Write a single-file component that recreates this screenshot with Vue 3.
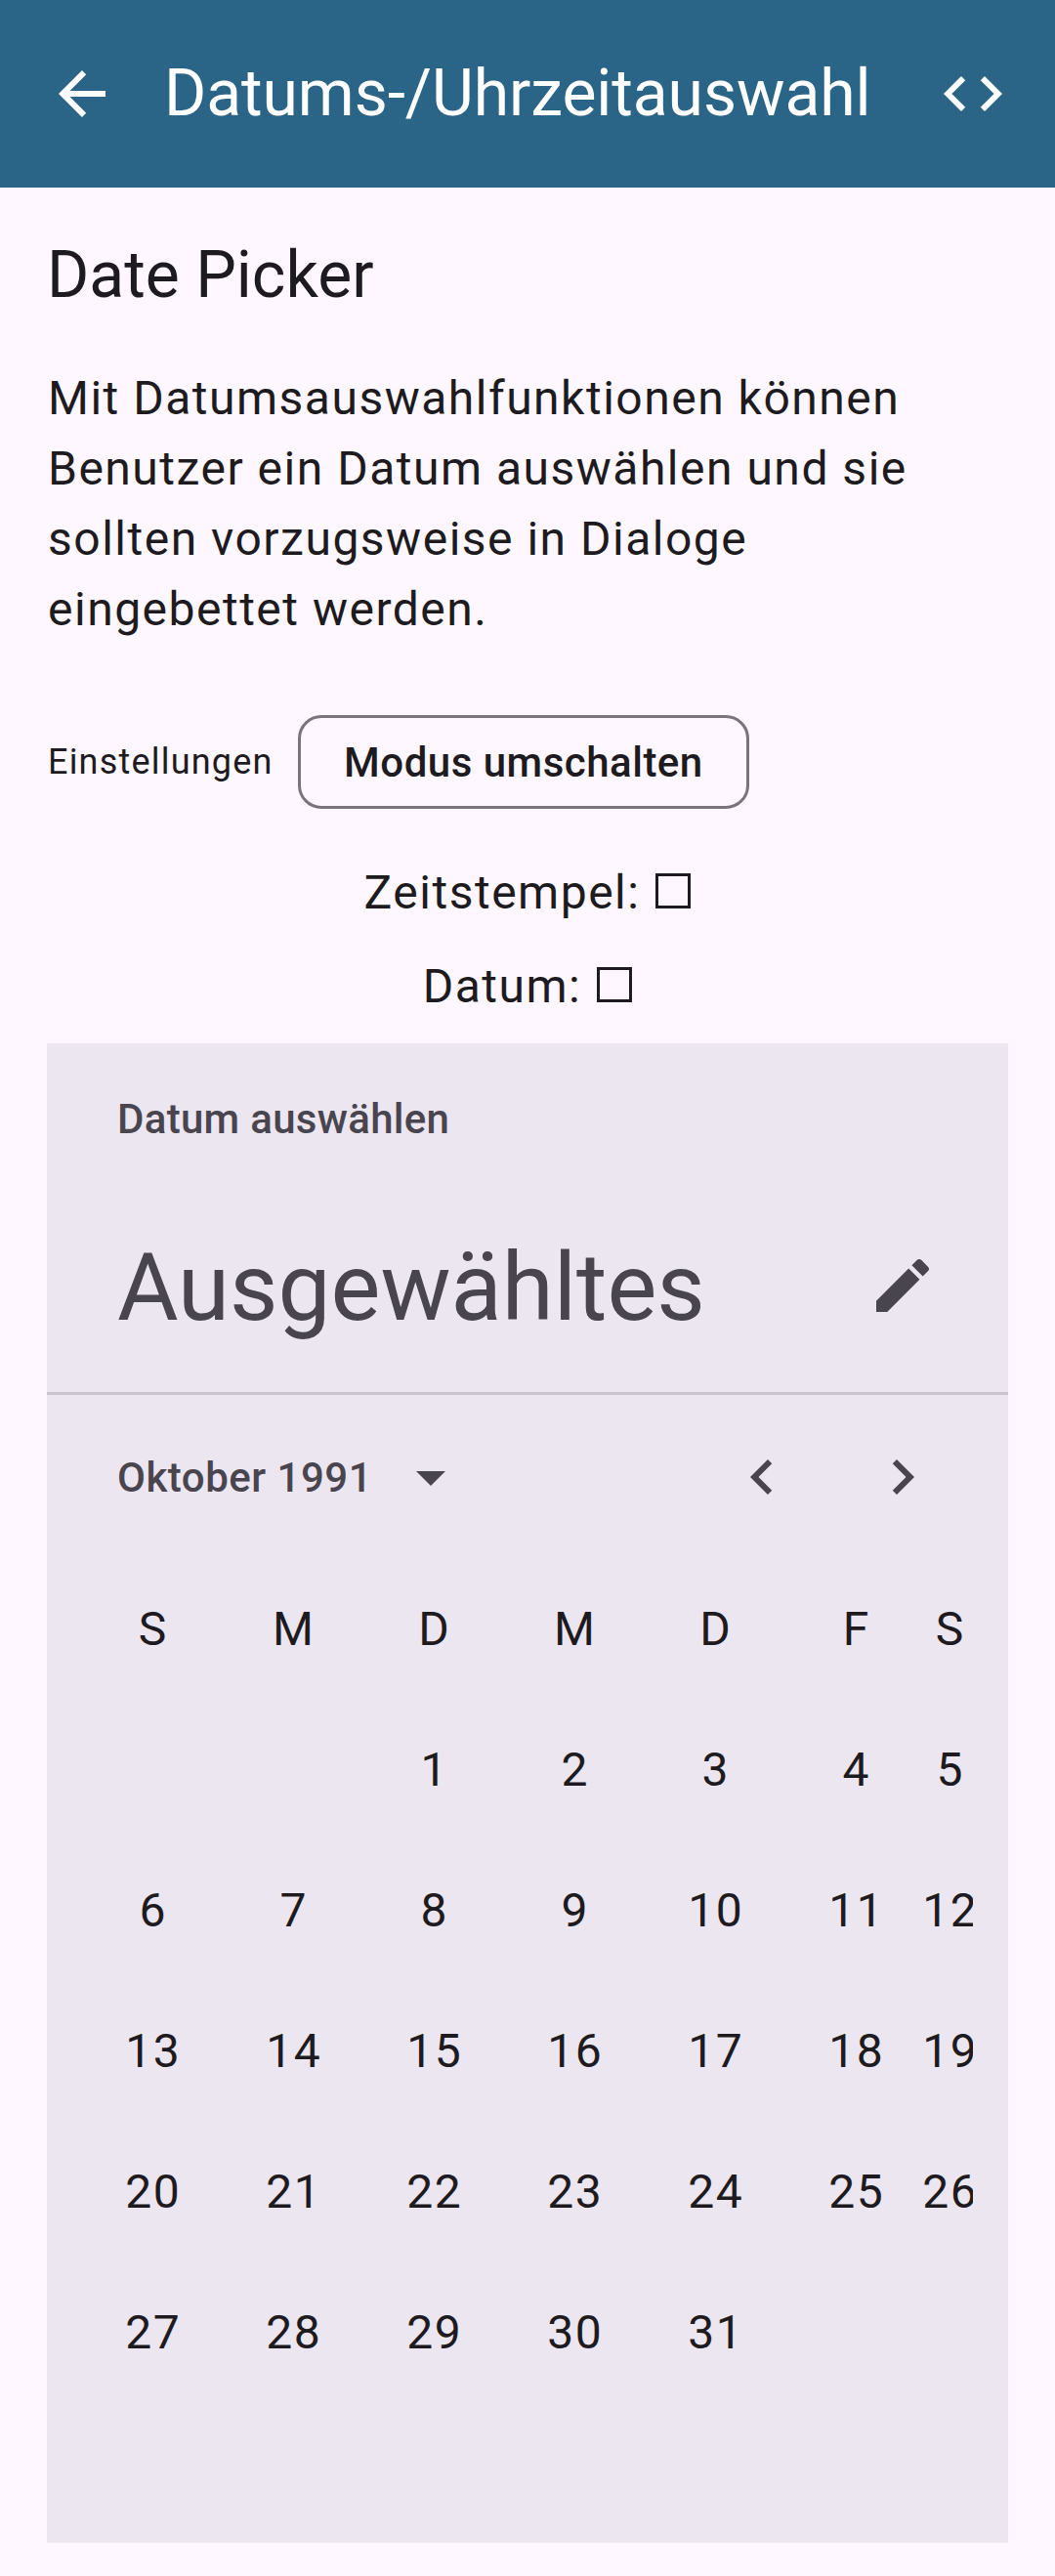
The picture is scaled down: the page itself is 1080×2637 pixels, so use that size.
<template>
  <div class="page">
    <header class="top-bar">
      <svg class="icon" viewBox="0 0 24 24"><path d="M20 11H7.83l5.59-5.59L12 4l-8 8 8 8 1.41-1.41L7.83 13H20v-2z" /></svg>
      <h1 class="top-title">Datums-/Uhrzeitauswahl</h1>
      <svg class="icon" viewBox="0 0 24 24"><path d="M9.4 16.6L4.8 12l4.6-4.6L8 6l-6 6 6 6 1.4-1.4zm5.2 0l4.6-4.6-4.6-4.6L16 6l6 6-6 6-1.4-1.4z" /></svg>
    </header>

    <main class="content">
      <h2 class="section-title">Date Picker</h2>
      <p class="description">
        Mit Datumsauswahlfunktionen können Benutzer ein Datum auswählen und sie sollten vorzugsweise in Dialoge eingebettet werden.
      </p>

      <div class="settings">
        <span class="settings-label">Einstellungen</span>
        <button class="mode-btn">Modus umschalten</button>
      </div>

      <div class="value-line"><span class="value-label">Zeitstempel:</span><span class="tofu"></span></div>
      <div class="value-line"><span class="value-label">Datum:</span><span class="tofu"></span></div>

      <section class="picker">
        <div class="picker-title">Datum auswählen</div>
        <div class="picker-headline">
          <span class="headline-text">Ausgewähltes</span>
          <svg class="icon dark" viewBox="0 0 24 24"><path d="M3 17.25V21h3.75L17.81 9.94l-3.75-3.75L3 17.25zM20.71 7.04c.39-.39.39-1.02 0-1.41l-2.34-2.34c-.39-.39-1.02-.39-1.41 0l-1.83 1.83 3.75 3.75 1.83-1.83z" /></svg>
        </div>
        <div class="divider"></div>

        <div class="month-row">
          <div class="month-select">
            <span>Oktober 1991</span>
            <svg class="icon dark" viewBox="0 0 24 24"><path d="M7 10l5 5 5-5z" /></svg>
          </div>
          <div class="month-nav">
            <svg class="icon dark" viewBox="0 0 24 24"><path d="M15.41 16.59L10.83 12l4.58-4.59L14 6l-6 6 6 6 1.41-1.41z" /></svg>
            <svg class="icon dark" viewBox="0 0 24 24"><path d="M8.59 16.59L13.17 12 8.59 7.41 10 6l6 6-6 6-1.41-1.41z" /></svg>
          </div>
        </div>

        <div class="calendar">
          <div v-for="(day, i) in weekdays" :key="'w' + i" class="cell">{{ day }}</div>
          <div v-for="(day, i) in days" :key="i" class="cell">{{ day }}</div>
        </div>
      </section>
    </main>
  </div>
</template>

<script setup>
const weekdays = ['S', 'M', 'D', 'M', 'D', 'F', 'S']

// Oktober 1991 beginnt am Dienstag
const days = ['', '']
for (let d = 1; d <= 31; d++) days.push(d)
while (days.length < 42) days.push('')
</script>

<style scoped>
.page {
  min-height: 2637px;
  background-color: #fef7ff;
  color: #1d1b20;
  font-family: Roboto, "Liberation Sans", sans-serif;
}

.top-bar {
  display: flex;
  align-items: center;
  justify-content: space-between;
  height: 192px;
  padding: 0 48px;
  box-sizing: border-box;
  background-color: #2a6486;
}

.top-bar .icon {
  fill: #ffffff;
}

.icon {
  width: 72px;
  height: 72px;
  flex-shrink: 0;
  display: block;
}

.icon.dark {
  fill: #49454f;
}

.top-title {
  flex: 1;
  margin: 0 0 0 48px;
  font-size: 66px;
  font-weight: 400;
  line-height: 84px;
  letter-spacing: -0.08px;
  color: #ffffff;
}

.content {
  padding: 48px 48px 0;
}

.section-title {
  margin: 0;
  font-size: 66px;
  font-weight: 400;
  line-height: 84px;
}

.description {
  margin: 48px 0 0;
  padding-left: 1px;
  font-size: 48px;
  line-height: 72px;
  letter-spacing: 1.5px;
}

.settings {
  display: flex;
  align-items: center;
  gap: 25px;
  height: 144px;
  margin-top: 48px;
  padding-left: 1px;
}

.settings-label {
  font-size: 36px;
  letter-spacing: 1.2px;
}

.mode-btn {
  height: 96px;
  padding: 0 44.5px;
  background: transparent;
  border: 3px solid #79747e;
  border-radius: 24px;
  color: #1d1b20;
  font-family: inherit;
  font-size: 42px;
  font-weight: 500;
  letter-spacing: 0.5px;
}

.value-line {
  display: flex;
  justify-content: center;
  align-items: center;
  gap: 16px;
  height: 72px;
  margin-top: 24px;
  font-size: 48px;
  letter-spacing: 1.5px;
}

.value-label {
  padding-top: 3px;
}

.tofu {
  width: 36px;
  height: 36px;
  box-sizing: border-box;
  border: 3px solid #1d1b20;
}

.picker {
  margin-top: 24px;
  background-color: #ece6f0;
}

.picker-title {
  padding: 48px 72px 0;
  font-size: 42px;
  font-weight: 500;
  line-height: 60px;
  letter-spacing: 0.3px;
  color: #49454f;
}

.picker-headline {
  display: flex;
  align-items: center;
  justify-content: space-between;
  height: 120px;
  margin-top: 80px;
  padding: 0 72px;
  font-size: 96px;
  color: #49454f;
}

.headline-text {
  padding-top: 3px;
}

.divider {
  height: 3px;
  margin-top: 49px;
  background-color: #cac4d0;
}

.month-row {
  display: flex;
  align-items: center;
  justify-content: space-between;
  padding: 48px 72px 0;
}

.month-select {
  display: flex;
  align-items: center;
  gap: 24px;
  font-size: 42px;
  font-weight: 500;
  letter-spacing: 0.5px;
  color: #49454f;
}

.month-nav {
  display: flex;
  gap: 72px;
}

.calendar {
  display: grid;
  grid-template-columns: repeat(6, 144px) 48px;
  grid-auto-rows: 144px;
  width: 912px;
  margin: 47px 0 0 36px;
  overflow: hidden;
}

.cell {
  display: flex;
  align-items: center;
  justify-content: center;
  padding-left: 1.5px;
  font-size: 48px;
  letter-spacing: 1.5px;
  white-space: nowrap;
}
</style>

<style>
body {
  background-color: #fef7ff;
}
</style>
